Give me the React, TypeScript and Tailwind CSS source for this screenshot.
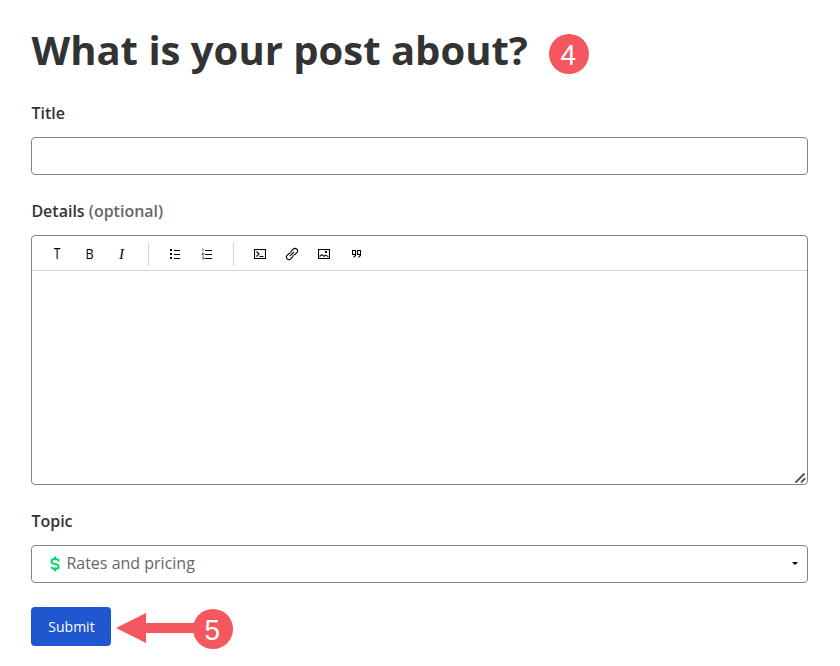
import { useState, type ReactNode } from "react";

function ToolButton({ label, children }: { label: string; children: ReactNode }) {
  return (
    <button type="button" aria-label={label} className="flex h-[34px] w-8 items-center justify-center text-black">
      {children}
    </button>
  );
}

function Badge({ children }: { children: ReactNode }) {
  return (
    <span className="flex size-10 items-center justify-center rounded-full bg-[#f5575f] pt-px pr-[0.6px] font-['Liberation_Sans',sans-serif] text-[30px] leading-10 font-normal text-white">
      <span className="scale-x-93">{children}</span>
    </span>
  );
}

function BulletList() {
  return (
    <svg width="12" height="12" viewBox="0 0 12 12" shapeRendering="crispEdges">
      <path d="M1 1h2v2H1zM1 5h2v2H1zM1 9h2v2H1zM5 2h6v1H5zM5 6h6v1H5zM5 10h6v1H5z" fill="currentColor" />
    </svg>
  );
}

function NumberedList() {
  return (
    <svg width="12" height="12" viewBox="0 0 12 12">
      <path d="M1 1h1v2M1 5h2v1H1v1h2M1 9h2v2H1" fill="none" stroke="#666" />
      <path d="M4 2h7v1H4zM4 6h7v1H4zM4 10h7v1H4z" fill="currentColor" />
    </svg>
  );
}

function CodeBlock() {
  return (
    <svg width="12" height="10" viewBox="0 0 12 10" fill="none" stroke="currentColor" strokeWidth="1.1">
      <rect x="0.5" y="0.5" width="11" height="9" />
      <path d="M2.5 2.5 5 5 2.5 7.5M5.5 7.5h4" />
    </svg>
  );
}

function ChainLink() {
  return (
    <svg width="14" height="14" viewBox="0 0 14 14" fill="none" stroke="currentColor" strokeWidth="1.1">
      <g transform="rotate(-45 7 7)">
        <path d="M6.6 8.6Q6.2 9.5 5 9.5H2.7a2.5 2.5 0 0 1 0-5H5Q6.2 4.5 6.6 5.4M7.4 5.4Q7.8 4.5 9 4.5h2.3a2.5 2.5 0 0 1 0 5H9Q7.8 9.5 7.4 8.6" />
        <path d="M4 7h6" />
      </g>
    </svg>
  );
}

function Picture() {
  return (
    <svg width="12" height="10" viewBox="0 0 12 10" fill="none" stroke="currentColor" strokeWidth="1.1">
      <rect x="0.5" y="0.5" width="11" height="9" />
      <path d="M1.5 7.5 4 5.6l2 1.7 1.7-1.2 2.8 1.8" />
      <path d="M7 2h2v2H7z" fill="currentColor" stroke="none" />
    </svg>
  );
}

function Quote() {
  return (
    <svg width="10" height="8" viewBox="0 0 10 8" fill="none" stroke="currentColor" strokeWidth="1.1">
      <path d="M3.5 4.5h-3v-4h3v5L1.5 7.3M8.5 4.5h-3v-4h3v5L6.5 7.3" />
    </svg>
  );
}

function Divider() {
  return <span className="mr-2.5 ml-2.5 h-6 w-px bg-[#d8d8d8]" />;
}

export default function App() {
  const [title, setTitle] = useState("");
  const [details, setDetails] = useState("");

  return (
    <main className="h-[666px] w-[840px] overflow-hidden bg-white pl-[31px] font-['Open_Sans',sans-serif] text-[#333]">
      {/* Heading */}
      <div className="flex h-[101px] items-start pt-[23px]">
        <h1 className="w-[518px] pl-[0.5px] text-[40px] leading-[54px] font-bold whitespace-nowrap">
          What is your post about?
        </h1>
        <div className="pt-[11px]">
          <Badge>4</Badge>
        </div>
      </div>

      <form className="w-[777px]" onSubmit={(e) => e.preventDefault()}>
        {/* Title */}
        <label htmlFor="title" className="block pl-[0.4px] text-base leading-6 font-semibold">
          Title
        </label>
        <input
          id="title"
          value={title}
          onChange={(e) => setTitle(e.target.value)}
          className="mt-3 block h-[38px] w-full rounded-[4px] border border-[#7b858f] px-4 outline-none"
        />

        {/* Details editor */}
        <label htmlFor="details" className="mt-6 block pl-[0.4px] text-base leading-6 font-semibold">
          Details <span className="text-[#666]">(optional)</span>
        </label>
        <div className="relative mt-3 flex h-[250px] flex-col rounded-[4px] border border-[#7b858f]">
          <div className="flex h-[35px] shrink-0 items-center border-b border-[#d8d8d8] pt-[2px] pl-[9px]">
            <ToolButton label="Paragraph">
              <span className="scale-x-80 pl-px font-['Roboto',sans-serif] text-[14px] leading-4">T</span>
            </ToolButton>
            <ToolButton label="Bold">
              <span className="scale-x-90 pb-px pl-px font-['Open_Sans',sans-serif] text-[14px] leading-4">B</span>
            </ToolButton>
            <ToolButton label="Italic">
              <span className="pl-px font-['Liberation_Serif',serif] text-[15px] leading-4 italic">I</span>
            </ToolButton>
            <span className="w-px" />
            <Divider />
            <ToolButton label="Bulleted list">
              <BulletList />
            </ToolButton>
            <ToolButton label="Numbered list">
              <NumberedList />
            </ToolButton>
            <Divider />
            <ToolButton label="Code block">
              <CodeBlock />
            </ToolButton>
            <ToolButton label="Link">
              <ChainLink />
            </ToolButton>
            <ToolButton label="Image">
              <Picture />
            </ToolButton>
            <ToolButton label="Quote">
              <span className="pl-0.5">
                <Quote />
              </span>
            </ToolButton>
          </div>
          <textarea
            id="details"
            value={details}
            onChange={(e) => setDetails(e.target.value)}
            className="block w-full flex-1 resize-none p-4 outline-none"
          />
          <svg className="absolute right-[1px] bottom-0" width="12" height="12" viewBox="0 0 12 12" fill="none" stroke="#555" strokeWidth="1.8">
            <path d="M1.5 10.5 10.5 1.5M7 10.5 11.3 6.2" />
          </svg>
        </div>

        {/* Topic */}
        <label className="mt-6 block pl-[0.4px] text-base leading-6 font-semibold">Topic</label>
        <button
          type="button"
          className="mt-3 flex h-[38px] w-full items-center rounded-[4px] border border-[#7b858f] pr-[9px] pl-[18px] text-left"
        >
          <svg width="10" height="16" viewBox="0 0 10 16" fill="none" stroke="#0bd46e" strokeWidth="2.1">
            <path d="M5 0.5v3M5 12.5v3M8.5 5.6V4.9Q8.5 3.2 6.8 3.2H3.3Q1.6 3.2 1.6 4.9V6Q1.6 7.2 3 7.5L7 8.5Q8.5 8.9 8.5 10.2V11Q8.5 12.6 6.8 12.6H3.3Q1.6 12.6 1.6 10.8" />
          </svg>
          <span className="ml-[6.4px] flex-1 pb-0.5 text-base leading-6 text-[#666]">Rates and pricing</span>
          <svg width="6" height="3" viewBox="0 0 6 3" className="-mt-px">
            <path d="M0 0h6L3 3z" fill="#000" />
          </svg>
        </button>

        {/* Submit row */}
        <div className="mt-6 flex items-start">
          <button type="submit" className="h-[39px] w-20 rounded-[4px] bg-[#1f57d0] pl-px text-sm text-white">
            Submit
          </button>
          <div className="flex items-center pt-0.5 pl-[5px]">
            <svg width="78" height="30" viewBox="0 0 78 30" fill="#f5575f" className="-mt-[2px]">
              <path d="M0 15 30 0v10h48v10H30v10z" />
            </svg>
            <div className="-ml-px">
              <Badge>5</Badge>
            </div>
          </div>
        </div>
      </form>
    </main>
  );
}
